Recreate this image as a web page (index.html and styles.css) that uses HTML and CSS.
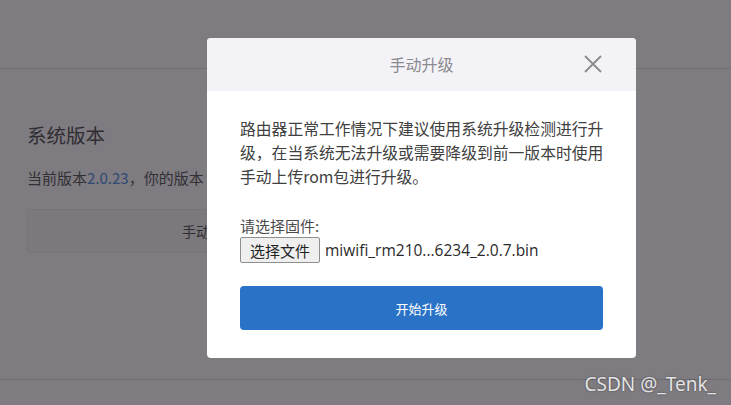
FILE: index.html
```html
<!DOCTYPE html>
<html>
<head>
    <meta charset="UTF-8">
    <meta name="viewport" content="width=device-width, initial-scale=1.0">
    <title>手动升级</title>
    <link rel="stylesheet" href="styles.css">
</head>
<body>
    <!-- 背景页面 -->
    <div class="page">
        <div class="page-header"></div>
        <div class="page-content">
            <h2 class="section-title">系统版本</h2>
            <p class="version">当前版本<span class="version-num">2.0.23</span>，你的版本</p>
            <div class="manual-box">手动升级</div>
        </div>
        <div class="page-footer"></div>
    </div>

    <!-- 升级弹窗 -->
    <div class="modal">
        <div class="modal-header">
            <span class="modal-title">手动升级</span>
            <span class="modal-close">
                <svg width="18" height="18" viewBox="0 0 18 18">
                    <path d="M1 1 L17 17 M17 1 L1 17" stroke="#8a898d" stroke-width="1.8" fill="none"/>
                </svg>
            </span>
        </div>
        <div class="modal-body">
            <p class="modal-desc">路由器正常工作情况下建议使用系统升级检测进行升级，在当系统无法升级或需要降级到前一版本时使用手动上传rom包进行升级。</p>
            <div class="file-label">请选择固件:</div>
            <div class="file-row">
                <button class="file-btn">选择文件</button>
                <span class="file-name">miwifi_rm210...6234_2.0.7.bin</span>
            </div>
            <button class="start-btn">开始升级</button>
        </div>
    </div>

    <div class="watermark">CSDN @_Tenk_</div>
</body>
</html>
```

FILE: styles.css
```css
html, body {
    margin: 0;
    padding: 0;
}
body {
    width: 731px;
    height: 405px;
    overflow: hidden;
    position: relative;
    background: #7e7b81;
    font-family: "Noto Sans CJK SC", "Noto Sans", sans-serif;
}
.page {
    display: flex;
    flex-direction: column;
    height: 405px;
}
.page-header {
    height: 68px;
    border-bottom: 1px solid #6f6c72;
    flex-shrink: 0;
}
.page-content {
    padding: 0 27px;
    flex: 1;
}
.section-title {
    margin: 50px 0 0;
    font-size: 19.5px;
    font-weight: normal;
    line-height: 32px;
    color: #2f2d31;
}
.version {
    margin: 15px 0 0;
    white-space: nowrap;
    font-size: 15px;
    line-height: 24px;
    color: #323034;
}
.version-num {
    color: #2d4a73;
}
.manual-box {
    margin-top: 19px;
    width: 364px;
    height: 42px;
    line-height: 42px;
    background: #7b787e;
    border: 1px solid #77747a;
    border-radius: 3px;
    text-align: center;
    font-size: 14px;
    color: #2f2d31;
}
.page-footer {
    height: 25px;
    border-top: 1px solid #6f6c72;
    flex-shrink: 0;
}
/* 弹窗 */
.modal {
    position: absolute;
    left: 207px;
    top: 38px;
    width: 429px;
    height: 320px;
    background: #fff;
    border-radius: 4px;
    overflow: hidden;
}
.modal-header {
    position: relative;
    height: 53px;
    background: #f3f2f7;
    display: flex;
    align-items: center;
    justify-content: center;
}
.modal-title {
    font-size: 16px;
    color: #8b8a8e;
    margin-top: -2px;
}
.modal-close {
    position: absolute;
    right: 34px;
    top: 16px;
    width: 18px;
    height: 18px;
}
.modal-body {
    padding: 26px 33px 0;
}
.modal-desc {
    margin: 0;
    width: 370px;
    font-size: 15.8px;
    line-height: 24px;
    color: #404040;
}
.file-label {
    margin-top: 27px;
    font-size: 15px;
    line-height: 20px;
    color: #4a4a4a;
}
.file-row {
    display: flex;
    align-items: center;
    margin-top: 1px;
}
.file-btn {
    width: 80px;
    height: 26px;
    padding: 0;
    font-family: "Noto Sans CJK SC", sans-serif;
    font-size: 15px;
    color: #222;
    background: #efefef;
    border: 1px solid #8f8f8f;
    border-radius: 2px;
}
.file-name {
    margin-left: 5px;
    font-family: "Open Sans", "Noto Sans", sans-serif;
    font-size: 15.5px;
    color: #2a2a2a;
}
.start-btn {
    display: block;
    margin-top: 23px;
    width: 363px;
    height: 44px;
    padding: 0;
    border: none;
    border-radius: 4px;
    background: #2a72c6;
    color: #fff;
    font-family: "Noto Sans CJK SC", sans-serif;
    font-size: 13px;
}
.watermark {
    position: absolute;
    right: 15px;
    bottom: 8px;
    font-family: "Noto Sans", "Open Sans", sans-serif;
    font-size: 19px;
    color: #e4e4e4;
    text-shadow: 0 0 2px rgba(0, 0, 0, 0.5);
}
```
